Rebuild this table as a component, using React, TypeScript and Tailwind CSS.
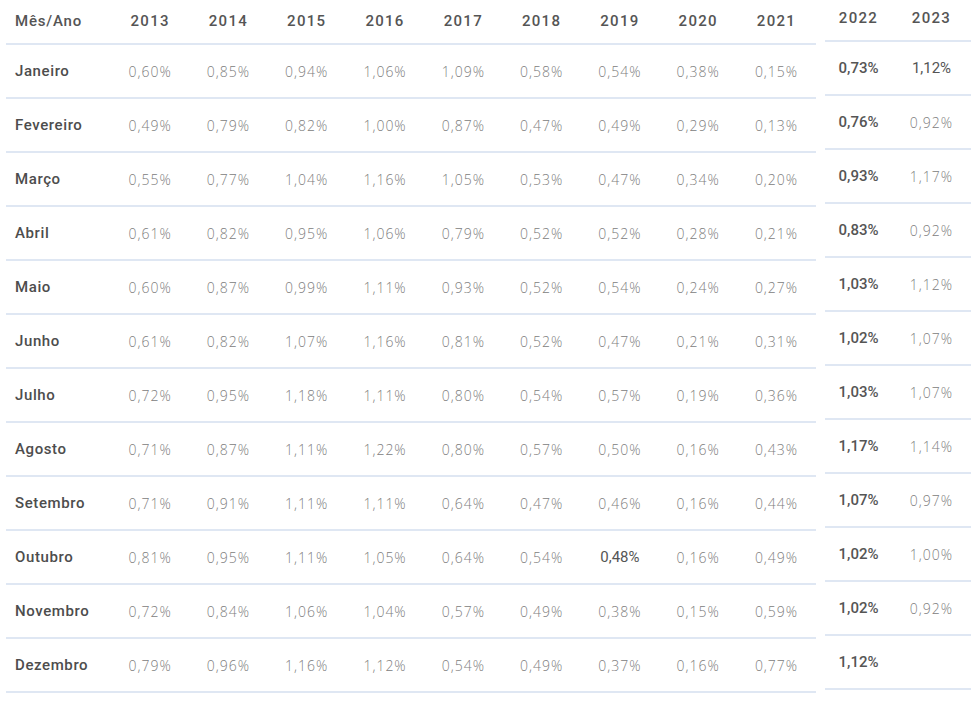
import React from 'react';

// índice mensal, 2013–2021 na tabela principal e 2022–2023 na lateral
const anos = ['2013', '2014', '2015', '2016', '2017', '2018', '2019', '2020', '2021'];

type Linha = { mes: string; valores: string[]; novos: string[] };

const linhas: Linha[] = [
  { mes: 'Janeiro', valores: ['0,60%', '0,85%', '0,94%', '1,06%', '1,09%', '0,58%', '0,54%', '0,38%', '0,15%'], novos: ['0,73%', '1,12%'] },
  { mes: 'Fevereiro', valores: ['0,49%', '0,79%', '0,82%', '1,00%', '0,87%', '0,47%', '0,49%', '0,29%', '0,13%'], novos: ['0,76%', '0,92%'] },
  { mes: 'Março', valores: ['0,55%', '0,77%', '1,04%', '1,16%', '1,05%', '0,53%', '0,47%', '0,34%', '0,20%'], novos: ['0,93%', '1,17%'] },
  { mes: 'Abril', valores: ['0,61%', '0,82%', '0,95%', '1,06%', '0,79%', '0,52%', '0,52%', '0,28%', '0,21%'], novos: ['0,83%', '0,92%'] },
  { mes: 'Maio', valores: ['0,60%', '0,87%', '0,99%', '1,11%', '0,93%', '0,52%', '0,54%', '0,24%', '0,27%'], novos: ['1,03%', '1,12%'] },
  { mes: 'Junho', valores: ['0,61%', '0,82%', '1,07%', '1,16%', '0,81%', '0,52%', '0,47%', '0,21%', '0,31%'], novos: ['1,02%', '1,07%'] },
  { mes: 'Julho', valores: ['0,72%', '0,95%', '1,18%', '1,11%', '0,80%', '0,54%', '0,57%', '0,19%', '0,36%'], novos: ['1,03%', '1,07%'] },
  { mes: 'Agosto', valores: ['0,71%', '0,87%', '1,11%', '1,22%', '0,80%', '0,57%', '0,50%', '0,16%', '0,43%'], novos: ['1,17%', '1,14%'] },
  { mes: 'Setembro', valores: ['0,71%', '0,91%', '1,11%', '1,11%', '0,64%', '0,47%', '0,46%', '0,16%', '0,44%'], novos: ['1,07%', '0,97%'] },
  { mes: 'Outubro', valores: ['0,81%', '0,95%', '1,11%', '1,05%', '0,64%', '0,54%', '0,48%', '0,16%', '0,49%'], novos: ['1,02%', '1,00%'] },
  { mes: 'Novembro', valores: ['0,72%', '0,84%', '1,06%', '1,04%', '0,57%', '0,49%', '0,38%', '0,15%', '0,59%'], novos: ['1,02%', '0,92%'] },
  { mes: 'Dezembro', valores: ['0,79%', '0,96%', '1,16%', '1,12%', '0,54%', '0,49%', '0,37%', '0,16%', '0,77%'], novos: ['1,12%', ''] },
];

const thin = "font-['Open_Sans',sans-serif] font-light text-[14px] tracking-[1px] text-[#808080]";
const plain = "font-['Roboto',sans-serif] text-[15px] text-[#555]";
const head = "font-['Roboto',sans-serif] font-medium text-[15px] tracking-[1.3px] text-[#555]";

const App: React.FC = () => {
  return (
    <div className="w-[971px] h-[702px] bg-white overflow-hidden flex pl-[6px] gap-[9px]">
      {/* Tabela principal */}
      <div className="w-[810px] shrink-0">
        <div className={`grid grid-cols-[105px_repeat(9,78.3px)] h-[45px] items-center border-b-2 border-[#dfe7f3] ${head}`}>
          <div className="pl-[9px] tracking-[0.8px]">Mês/Ano</div>
          {anos.map((ano) => (
            <div key={ano} className="text-center">{ano}</div>
          ))}
        </div>
        {linhas.map((linha) => (
          <div
            key={linha.mes}
            className="grid grid-cols-[105px_repeat(9,78.3px)] h-[54px] items-center border-b-2 border-[#dfe7f3]"
          >
            <div className="pl-[9px] font-['Roboto',sans-serif] font-medium text-[15px] text-[#4d4d4d] tracking-[0.6px]">
              {linha.mes}
            </div>
            {linha.valores.map((v, i) => (
              <div
                key={i}
                className={`text-center ${linha.mes === 'Outubro' && i === 6 ? plain : thin}`}
              >
                {v}
              </div>
            ))}
          </div>
        ))}
      </div>

      {/* 2022 / 2023 */}
      <div className="w-[146px] shrink-0">
        <div className={`grid grid-cols-[67px_79px] h-[42px] items-center pb-[3px] border-b-2 border-[#dfe7f3] ${head}`}>
          <div className="text-center">2022</div>
          <div className="text-center">2023</div>
        </div>
        {linhas.map((linha) => (
          <div
            key={linha.mes}
            className="grid grid-cols-[67px_79px] h-[54px] items-center border-b-2 border-[#dfe7f3]"
          >
            <div className="text-center font-['Roboto',sans-serif] font-medium text-[15px] text-[#555]">
              {linha.novos[0]}
            </div>
            <div className={`text-center ${linha.mes === 'Janeiro' ? plain : thin}`}>
              {linha.novos[1]}
            </div>
          </div>
        ))}
      </div>
    </div>
  );
};

export default App;
